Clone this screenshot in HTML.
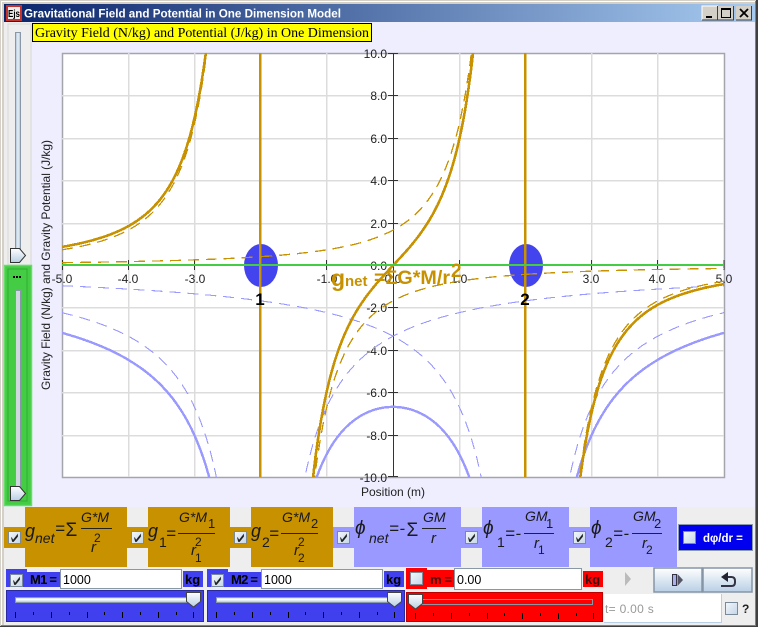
<!DOCTYPE html>
<html><head><meta charset="utf-8"><style>
html,body{margin:0;padding:0;background:#d4d0c8;overflow:hidden;width:758px;height:627px}
svg{display:block;position:absolute;left:0;top:0;overflow:hidden}
text{font-family:"Liberation Sans",sans-serif}
.i{font-style:italic;fill:#1a1a1a}
.b{font-weight:bold}
.tk{font-size:12px;fill:#222}
</style></head><body>
<svg xmlns="http://www.w3.org/2000/svg" width="758" height="627" viewBox="0 0 758 627">
<defs>
<linearGradient id="tb" x1="0" x2="1"><stop offset="0" stop-color="#0a246a"/><stop offset="1" stop-color="#a6caf0"/></linearGradient>
<linearGradient id="met" x1="0" x2="0" y1="0" y2="1"><stop offset="0" stop-color="#fff"/><stop offset="1" stop-color="#b8cfe5"/></linearGradient>
<linearGradient id="cb" x1="0" x2="1" y1="0" y2="1"><stop offset="0" stop-color="#f4f7fb"/><stop offset="1" stop-color="#c4d6e8"/></linearGradient>
<linearGradient id="trk" x1="0" x2="0" y1="0" y2="1"><stop offset="0" stop-color="#c8d8e6"/><stop offset=".4" stop-color="#fff"/><stop offset="1" stop-color="#a8c0d4"/></linearGradient>
<linearGradient id="vtrk" x1="0" x2="1"><stop offset="0" stop-color="#a8c0d4"/><stop offset=".5" stop-color="#e8f0f6"/><stop offset="1" stop-color="#a8c0d4"/></linearGradient>
<clipPath id="pc"><rect x="62" y="53" width="662" height="424"/></clipPath>
<g id="chk"><rect x=".5" y=".5" width="12" height="12" fill="url(#cb)" stroke="#7a8a99"/><path d="M3.5 6.5L5 9.5L9.5 3.8L9.5 5.5L5.5 10.5L4.5 10.5Z" fill="#222" stroke="#222" stroke-width=".8"/></g>
<g id="unc"><rect x=".5" y=".5" width="12" height="12" fill="url(#cb)" stroke="#7a8a99"/></g>
<path id="hth" d="M.5 .5H14.5V9.5L7.5 15L.5 9.5Z" fill="url(#met)" stroke="#444"/>
<path id="vth" d="M.5 .5H9.5L15.5 7.5L9.5 14.5H.5Z" fill="url(#met)" stroke="#333"/>
</defs>

<!-- window frame -->
<rect width="758" height="627" fill="#d4d0c8"/>
<rect x="1" y="1" width="755" height="1" fill="#fff"/>
<rect x="1" y="1" width="1" height="624" fill="#fff"/>
<rect x="756" y="0" width="2" height="627" fill="#404040"/>
<rect x="755" y="1" width="1" height="625" fill="#808080"/>
<rect x="0" y="626" width="758" height="1" fill="#404040"/>
<rect x="1" y="625" width="755" height="1" fill="#808080"/>

<!-- title bar -->
<rect x="4" y="4" width="751" height="18" fill="url(#tb)"/>
<rect x="6" y="5" width="16" height="16" fill="#c8322c"/>
<rect x="8" y="7" width="12" height="12" fill="#eee"/>
<text x="8" y="17" font-size="10" class="b" fill="#000" textLength="12" lengthAdjust="spacingAndGlyphs">Ejs</text>
<text x="24" y="17.5" font-size="12" class="b" fill="#fff" textLength="317" lengthAdjust="spacingAndGlyphs">Gravitational Field and Potential in One Dimension Model</text>
<g shape-rendering="crispEdges">
<rect x="702" y="6" width="16" height="14" fill="#d4d0c8"/><path d="M702 20V6H718M718 6V20H702" fill="none" stroke="#fff"/><path d="M717.5 6V20H702" fill="none" stroke="#404040"/>
<rect x="706" y="16" width="6" height="2" fill="#000"/>
<rect x="718" y="6" width="16" height="14" fill="#d4d0c8"/><path d="M733.5 6V20H718" fill="none" stroke="#404040"/>
<rect x="721.5" y="8.5" width="9" height="9" fill="none" stroke="#000"/><rect x="721" y="8" width="10" height="2" fill="#000"/>
<rect x="736" y="6" width="16" height="14" fill="#d4d0c8"/><path d="M751.500 6V20H736" fill="none" stroke="#404040"/>
</g>
<path d="M740 9L748 17M748 9L740 17" stroke="#000" stroke-width="1.8"/>

<!-- content background -->
<rect x="4" y="22" width="751" height="485" fill="#eeeeff"/>
<rect x="4" y="22" width="28" height="243" fill="#eeeeee"/>
<rect x="8" y="24" width="23" height="241" fill="#eeeeee" stroke="#d8d8d8"/>
<rect x="15.500" y="32.500" width="5" height="225" fill="url(#vtrk)" stroke="#8898a8"/>
<use href="#vth" x="10" y="248"/>

<!-- green slider -->
<rect x="4" y="265" width="28" height="241" fill="#44cc44"/>
<rect x="4.500" y="265.500" width="27" height="240" fill="none" stroke="#66dd66" stroke-width="1.500"/>
<path d="M8 277V269H27V501H8V277" fill="none" stroke="#2fae2f"/>
<rect x="13" y="276" width="2" height="2" fill="#000"/><rect x="16" y="276" width="2" height="2" fill="#000"/><rect x="19" y="276" width="2" height="2" fill="#000"/>
<rect x="15.500" y="290.500" width="5" height="200" fill="#cfd8df" stroke="#8898a8"/>
<use href="#vth" x="10" y="486"/>

<!-- label -->
<rect x="32.500" y="23.500" width="339" height="18" fill="#ffff00" stroke="#000"/>
<text x="35" y="37" font-size="14" fill="#000" style="font-family:'Liberation Serif',serif" textLength="334" lengthAdjust="spacingAndGlyphs">Gravity Field (N/kg) and Potential (J/kg) in One Dimension</text>

<!-- plot -->
<rect x="62.500" y="53.500" width="662" height="424" fill="#fff" stroke="#a4a4ac" stroke-width="1.500"/>
<path shape-rendering="crispEdges" d="M128.500 53V477M194.500 53V477M260.500 53V477M326.500 53V477M459.500 53V477M525.500 53V477M591.500 53V477M657.500 53V477M62 95.500H724M62 138.500H724M62 180.500H724M62 223.500H724M62 307.500H724M62 350.500H724M62 392.500H724M62 435.500H724" stroke="#dcdcdc" stroke-width="1.500" fill="none"/>
<path shape-rendering="crispEdges" d="M393.500 53V477M62 265.500H724" stroke="#333" fill="none"/>
<path shape-rendering="crispEdges" d="M62.500 260V270M128.500 260V270M194.500 260V270M260.500 260V270M326.500 260V270M459.500 260V270M525.500 260V270M591.500 260V270M657.500 260V270M724 260V270M388 53.500H398M388 95.500H398M388 138.500H398M388 180.500H398M388 223.500H398M388 265.500H398M388 307.500H398M388 350.500H398M388 392.500H398M388 435.500H398M388 476.500H398" stroke="#333" fill="none"/>
<g text-anchor="end">
<text x="387" y="58" class="tk">10.0</text><text x="387" y="100" class="tk">8.0</text><text x="387" y="143" class="tk">6.0</text><text x="387" y="185" class="tk">4.0</text><text x="387" y="228" class="tk">2.0</text><text x="387" y="270" class="tk">0.0</text><text x="387" y="312" class="tk">-2.0</text><text x="387" y="355" class="tk">-4.0</text><text x="387" y="397" class="tk">-6.0</text><text x="387" y="440" class="tk">-8.0</text><text x="387" y="482" class="tk">-10.0</text>
</g>
<g text-anchor="middle">
<text x="62" y="283" class="tk">-5.0</text><text x="128" y="283" class="tk">-4.0</text><text x="195" y="283" class="tk">-3.0</text><text x="327" y="283" class="tk">-1.0</text><text x="393" y="283" class="tk">0.0</text><text x="459" y="283" class="tk">1.0</text><text x="591" y="283" class="tk">3.0</text><text x="657" y="283" class="tk">4.0</text><text x="724" y="283" class="tk">5.0</text>
</g>
<ellipse cx="261" cy="265.500" rx="17" ry="21.500" fill="#4444ee"/>
<ellipse cx="526" cy="265.500" rx="17" ry="21.500" fill="#4444ee"/>
<g id="curves" clip-path="url(#pc)" fill="none" shape-rendering="crispEdges"></g>
<rect x="62" y="264" width="662" height="2" fill="#44cc44"/>
<text x="260" y="305" font-size="17" class="b" fill="#000" text-anchor="middle">1</text>
<text x="525" y="305" font-size="17" class="b" fill="#000" text-anchor="middle">2</text>
<text x="331" y="286" font-size="23" class="b" fill="#c79100">g</text>
<text x="345" y="286" font-size="15" class="b" fill="#c79100">net</text>
<text x="374" y="284" font-size="19" class="b" fill="#c79100" textLength="76" lengthAdjust="spacingAndGlyphs">=ΣG*M/r</text>
<text x="451" y="277" font-size="19" class="b" fill="#c79100">2</text>
<text transform="translate(50 265) rotate(-90)" font-size="12" fill="#222" text-anchor="middle" textLength="250" lengthAdjust="spacingAndGlyphs">Gravity Field (N/kg) and Gravity Potential (J/kg)</text>
<text x="393" y="496" font-size="12" fill="#222" text-anchor="middle">Position (m)</text>

<!-- formula row -->
<rect x="4" y="507" width="751" height="61" fill="#eeeeee"/>
<g shape-rendering="crispEdges">
<rect x="4" y="527" width="21" height="21" fill="#c79100"/><rect x="25" y="507" width="102" height="60" fill="#c79100"/>
<rect x="127" y="527" width="21" height="21" fill="#c79100"/><rect x="148" y="507" width="82" height="60" fill="#c79100"/>
<rect x="230" y="527" width="21" height="21" fill="#c79100"/><rect x="251" y="507" width="82" height="60" fill="#c79100"/>
<rect x="333" y="527" width="21" height="21" fill="#9999ff"/><rect x="354" y="507" width="107" height="60" fill="#9999ff"/>
<rect x="461" y="527" width="21" height="21" fill="#9999ff"/><rect x="482" y="507" width="87" height="60" fill="#9999ff"/>
<rect x="569" y="527" width="21" height="21" fill="#9999ff"/><rect x="590" y="507" width="87" height="60" fill="#9999ff"/>
</g>
<use href="#chk" x="8" y="531"/><use href="#chk" x="131" y="531"/><use href="#chk" x="234" y="531"/><use href="#chk" x="337" y="531"/><use href="#chk" x="465" y="531"/><use href="#chk" x="573" y="531"/>
<!-- g net -->
<text x="25" y="537" font-size="18" class="i">g</text><text x="35" y="543" font-size="14" class="i">net</text>
<text x="55" y="534" font-size="17" class="i">=</text><text x="65.500" y="536" font-size="19" fill="#1a1a1a">Σ</text>
<text x="81" y="522" font-size="14" class="i">G*M</text><rect x="81" y="528" width="31" height="1" fill="#222"/>
<text x="94" y="542" font-size="12" fill="#1a1a1a">2</text><text x="91" y="552" font-size="15" class="i">r</text>
<!-- g1 -->
<text x="148" y="537" font-size="18" class="i">g</text><text x="159" y="547" font-size="14" fill="#1a1a1a">1</text>
<text x="166" y="539" font-size="17" class="i">=</text>
<text x="179" y="522" font-size="14" class="i">G*M</text><text x="208" y="528" font-size="13" fill="#1a1a1a">1</text>
<rect x="178" y="533" width="37" height="1" fill="#222"/>
<text x="195" y="546" font-size="12" fill="#1a1a1a">2</text><text x="191" y="555" font-size="15" class="i">r</text><text x="195" y="562" font-size="12" fill="#1a1a1a">1</text>
<!-- g2 -->
<text x="251" y="537" font-size="18" class="i">g</text><text x="262" y="547" font-size="14" fill="#1a1a1a">2</text>
<text x="269" y="539" font-size="17" class="i">=</text>
<text x="282" y="522" font-size="14" class="i">G*M</text><text x="311" y="528" font-size="13" fill="#1a1a1a">2</text>
<rect x="281" y="533" width="37" height="1" fill="#222"/>
<text x="298" y="546" font-size="12" fill="#1a1a1a">2</text><text x="294" y="555" font-size="15" class="i">r</text><text x="298" y="562" font-size="12" fill="#1a1a1a">2</text>
<!-- phi net -->
<text x="355" y="534" font-size="19" class="i">ϕ</text><text x="369" y="543" font-size="14" class="i">net</text>
<text x="389" y="534" font-size="17" class="i" textLength="16">=-</text><text x="406.500" y="536" font-size="19" fill="#1a1a1a">Σ</text>
<text x="423" y="522" font-size="14" class="i">GM</text><rect x="422" y="528" width="24" height="1" fill="#222"/>
<text x="431" y="543" font-size="15" class="i">r</text>
<!-- phi1 -->
<text x="483" y="534" font-size="19" class="i">ϕ</text><text x="497" y="547" font-size="14" fill="#1a1a1a">1</text>
<text x="505" y="539" font-size="17" class="i" textLength="16">=-</text>
<text x="525" y="521" font-size="14" class="i">GM</text><text x="546" y="528" font-size="13" fill="#1a1a1a">1</text>
<rect x="524" y="533" width="30" height="1" fill="#222"/>
<text x="534" y="548" font-size="15" class="i">r</text><text x="538" y="554" font-size="12" fill="#1a1a1a">1</text>
<!-- phi2 -->
<text x="591" y="534" font-size="19" class="i">ϕ</text><text x="605" y="547" font-size="14" fill="#1a1a1a">2</text>
<text x="613" y="539" font-size="17" class="i" textLength="16">=-</text>
<text x="633" y="521" font-size="14" class="i">GM</text><text x="654" y="528" font-size="13" fill="#1a1a1a">2</text>
<rect x="632" y="533" width="30" height="1" fill="#222"/>
<text x="642" y="548" font-size="15" class="i">r</text><text x="646" y="554" font-size="12" fill="#1a1a1a">2</text>
<!-- dphi button -->
<rect x="678.500" y="524.500" width="74" height="26" fill="#0000ee" stroke="#8a9aaa"/>
<use href="#unc" x="683" y="531"/>
<text x="703" y="542" font-size="11.500" class="b" fill="#fff">dφ/dr =</text>

<!-- control row -->
<rect x="4" y="568" width="751" height="57" fill="#eeeeee"/>
<g shape-rendering="crispEdges">
<rect x="6" y="569" width="21" height="18" fill="#4040ee"/><rect x="27" y="572" width="33" height="15" fill="#4040ee"/>
<rect x="183" y="571" width="20" height="16" fill="#4040ee"/>
<rect x="6.500" y="590.500" width="197" height="31" fill="#4040ee" stroke="#2a2aa0"/>
<rect x="207" y="569" width="21" height="18" fill="#4040ee"/><rect x="228" y="572" width="33" height="15" fill="#4040ee"/>
<rect x="384" y="571" width="20" height="16" fill="#4040ee"/>
<rect x="207.500" y="590.500" width="197" height="31" fill="#4040ee" stroke="#2a2aa0"/>
<rect x="406" y="568" width="21" height="21" fill="#ff0000"/><rect x="427" y="570" width="27" height="17" fill="#ff0000"/>
<rect x="583" y="571" width="20" height="16" fill="#ff0000"/>
<rect x="406.500" y="592.500" width="196" height="29" fill="#ff0000" stroke="#c00000"/>
</g>
<rect x="60.500" y="569.500" width="121" height="19" fill="#fff" stroke="#8a98a6"/>
<rect x="261.500" y="569.500" width="121" height="19" fill="#fff" stroke="#8a98a6"/>
<rect x="454.500" y="568.500" width="127" height="21" fill="#fff" stroke="#8a98a6"/>
<use href="#chk" x="10" y="574"/><use href="#chk" x="211" y="574"/><use href="#unc" x="410" y="572"/>
<text x="30" y="584" font-size="13" class="b" fill="#000" textLength="27">M1 =</text>
<text x="231" y="584" font-size="13" class="b" fill="#000" textLength="27">M2 =</text>
<text x="430" y="584" font-size="13" class="b" fill="#401010" textLength="22">m =</text>
<text x="63" y="584" font-size="12.500" fill="#000">1000</text>
<text x="264" y="584" font-size="12.500" fill="#000">1000</text>
<text x="457" y="584" font-size="12.500" fill="#000">0.00</text>
<text x="185" y="584" font-size="13" class="b" fill="#000">kg</text>
<text x="386" y="584" font-size="13" class="b" fill="#000">kg</text>
<text x="585" y="584" font-size="13" class="b" fill="#401010">kg</text>
<!-- sliders -->
<rect x="15.500" y="597.500" width="178" height="5" fill="url(#trk)" stroke="#8898a8"/>
<rect x="216.500" y="597.500" width="178" height="5" fill="url(#trk)" stroke="#8898a8"/>
<rect x="421.500" y="599.500" width="171" height="5" fill="#ff0000" stroke="#8898a8"/>
<path shape-rendering="crispEdges" d="M15.500 612V618M33.500 612V615M51.500 612V618M69.500 612V615M87.500 612V618M104.500 612V615M122.500 612V618M140.500 612V615M158.500 612V618M176.500 612V615M193.500 612V618M216.500 612V618M234.500 612V615M252.500 612V618M270.500 612V615M288.500 612V618M305.500 612V615M323.500 612V618M341.500 612V615M359.500 612V618M377.500 612V615M394.500 612V618M415.500 613V619M433.500 613V616M451.500 613V619M469.500 613V616M487.500 613V619M504.500 613V616M522.500 613V619M540.500 613V616M558.500 613V619M576.500 613V616M593.500 613V619" stroke="#000" fill="none"/>
<use href="#hth" x="186" y="592"/><use href="#hth" x="387" y="592"/><use href="#hth" x="408" y="594"/>
<!-- buttons -->
<rect x="654" y="568" width="48" height="24" fill="url(#met)" stroke="#8595a5" stroke-width="1.500"/>
<rect x="703" y="568" width="49" height="24" fill="url(#met)" stroke="#8595a5" stroke-width="1.500"/>
<path d="M625 572L631 579L625 586Z" fill="#bbb"/>
<rect x="672.500" y="574.500" width="4" height="11" fill="#aab0e8" stroke="#334"/>
<path d="M677.500 574L683 580L677.500 586Z" fill="#556"/>
<path d="M721 577L728 572V582Z" fill="#223"/>
<path d="M728 577H731.500Q735 577 735 581V582.500Q735 586 731.500 586H721" fill="none" stroke="#334" stroke-width="2"/>
<rect x="604" y="594" width="117" height="28" fill="#fff"/>
<path d="M721.500 594V622.500H604" fill="none" stroke="#b8cfe5"/>
<text x="605" y="613" font-size="12" fill="#999" letter-spacing=".3">t= 0.00 s</text>
<use href="#unc" x="725" y="602"/>
<text x="742" y="613" font-size="12" class="b" fill="#222">?</text>
</svg>
<script>
(function(){
var NS="http://www.w3.org/2000/svg",c=document.getElementById("curves"),K=6.67;
function X(x){return 393+x*66.2}
function Y(y){return 265.5-y*21.2}
function path(f,a,b,st,w,d){
 var s="",n=Math.round((b-a)/0.01),first=true;
 for(var i=0;i<=n;i++){var x=a+(b-a)*i/n,y=f(x);if(Math.abs(y)>10.6){first=true;continue;}s+=(first?"M":"L")+X(x).toFixed(1)+" "+Y(y).toFixed(1);first=false;}
 var p=document.createElementNS(NS,"path");p.setAttribute("d",s);p.setAttribute("stroke",st);p.setAttribute("stroke-width",w);
 if(d)p.setAttribute("stroke-dasharray",d);c.appendChild(p);
}
function g1(x){var r=x+2;return (r<0?1:-1)*K/(r*r)}
function g2(x){var r=x-2;return (r<0?1:-1)*K/(r*r)}
function gn(x){return g1(x)+g2(x)}
function p1(x){return -K/Math.abs(x+2)}
function p2(x){return -K/Math.abs(x-2)}
function pn(x){return p1(x)+p2(x)}
var BL="#9999ff",GO="#c79100",D="11 7";
[[-5,-2.01],[-1.99,1.99],[2.01,5]].forEach(function(r){
 path(p1,r[0],r[1],BL,1.1,D);path(p2,r[0],r[1],BL,1.1,D);path(pn,r[0],r[1],BL,2.4);
});
[[-5,-2.01],[-1.99,1.99],[2.01,5]].forEach(function(r){
 path(g1,r[0],r[1],GO,1.3,D);path(g2,r[0],r[1],GO,1.3,D);path(gn,r[0],r[1],GO,2.6);
});
[[259,2.4],[524,2.4]].forEach(function(v){var e=document.createElementNS(NS,"rect");e.setAttribute("x",v[0]);e.setAttribute("y",53);e.setAttribute("width",v[1]);e.setAttribute("height",424);e.setAttribute("fill",GO);c.appendChild(e);});
})();
</script>
</body></html>
